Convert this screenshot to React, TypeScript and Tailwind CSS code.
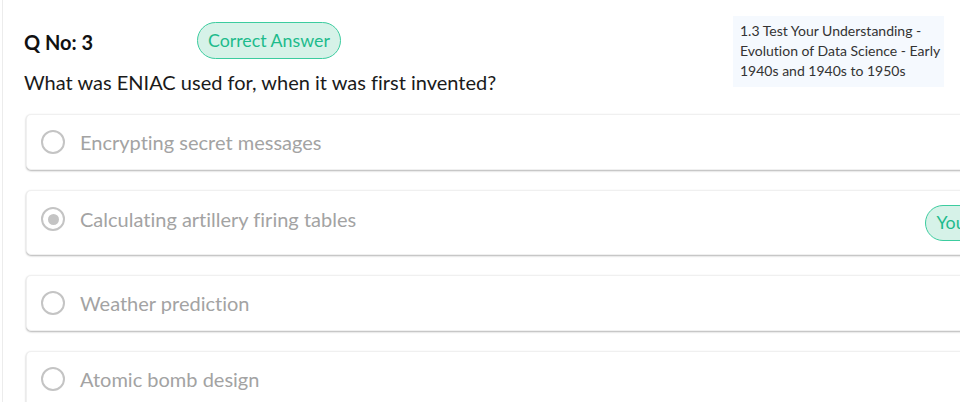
import React from "react";

const options = [
  { text: "Encrypting secret messages", selected: false, you: false },
  { text: "Calculating artillery firing tables", selected: true, you: true },
  { text: "Weather prediction", selected: false, you: false },
  { text: "Atomic bomb design", selected: false, you: false },
];

function Radio({ selected }: { selected: boolean }) {
  return (
    <div className="w-[24px] h-[24px] rounded-full border-[2.5px] border-[#c4c4c4] flex items-center justify-center shrink-0">
      {selected && <div className="w-[11px] h-[11px] rounded-full bg-[#c4c4c4]" />}
    </div>
  );
}

export default function App() {
  return (
    <div
      className="w-[960px] h-[402px] overflow-hidden bg-white"
      style={{ fontFamily: "Lato, 'Noto Sans', sans-serif", fontVariantLigatures: "none" }}
    >
      <div className="ml-[2px] h-full border-l border-[#ececec] pl-[21px] w-[1100px]">
        <div className="flex pt-[16px]">
          <div className="w-[709px] pt-[6px]">
            <div className="flex items-center h-[37px]">
              <div className="w-[173px] text-[20px] font-bold text-[#111] leading-none pt-[2px]">Q No: 3</div>
              <div className="h-[37px] px-[10px] rounded-full border border-[#3ccc9f] bg-[#d6f2e8] text-[#1dbb8c] text-[17.8px] flex items-center">
                Correct Answer
              </div>
            </div>
            <div className="mt-[10px] text-[20px] leading-[26px] text-[#1a1a1a]">
              What was ENIAC used for, when it was first invented?
            </div>
          </div>
          <div className="w-[211px] h-[71px] bg-[#f5f9fe] pl-[7px] pt-[5px] text-[14px] leading-[20px] text-[#333]">
            1.3 Test Your Understanding - Evolution of Data Science - Early 1940s and 1940s to 1950s
          </div>
        </div>
        <div className="mt-[19px] ml-[2px] flex flex-col gap-[20px] w-[1037px]">
          {options.map((o, i) => (
            <div
              key={i}
              className={`flex items-center pl-[14px] pr-[16px] rounded-[5px] border border-[#f0f0f0] bg-white shadow-[0_1px_2px_rgba(0,0,0,0.3)] ${o.you ? "h-[65px]" : "h-[56px]"}`}
            >
              <div className={`flex items-center ${o.you ? "-mt-[7px]" : ""}`}>
                <Radio selected={o.selected} />
                <div className="ml-[15px] text-[20px] text-[#a3a3a3]">{o.text}</div>
              </div>
              {o.you && (
                <div className="ml-auto h-[36px] px-[10px] rounded-full border border-[#3ccc9f] bg-[#d6f2e8] text-[#1dbb8c] text-[17.8px] flex items-center">
                  Your Answer
                </div>
              )}
            </div>
          ))}
        </div>
      </div>
    </div>
  );
}
